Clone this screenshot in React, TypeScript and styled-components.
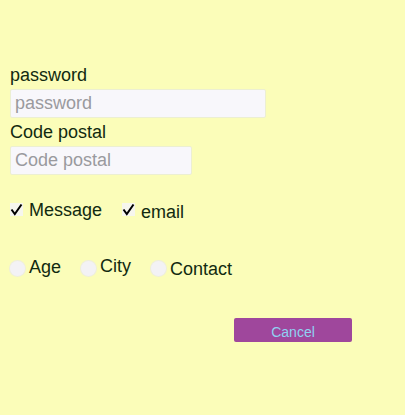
import React from "react";
import styled, { createGlobalStyle } from "styled-components";

const Global = createGlobalStyle`
  html, body { margin: 0; padding: 0; background: #fbfdb9; }
  body { font-family: "Liberation Sans", Arial, sans-serif; }
`;

const Page = styled.div`
  width: 405px;
  height: 415px;
  box-sizing: border-box;
  padding: 65px 0 0 10px;
  display: flex;
  flex-direction: column;
  color: #112a10;
`;

const Label = styled.label`
  font-size: 18px;
  line-height: 21px;
  height: 21px;
`;

const Input = styled.input<{ $w: number }>`
  box-sizing: border-box;
  width: ${(p) => p.$w}px;
  height: 29px;
  margin: 3px 0 4px 0;
  border: 1px solid #ecefd2;
  border-radius: 2px;
  background: #f8f7fb;
  padding: 0 4px;
  font-family: "Liberation Sans", Arial, sans-serif;
  font-size: 18px;
  color: #222;
  outline: none;
  &::placeholder { color: #9a9a9e; }
`;

const Row = styled.div<{ $top: number; $gap: number }>`
  display: flex;
  align-items: flex-start;
  gap: ${(p) => p.$gap}px;
  margin-top: ${(p) => p.$top}px;
  height: 22px;
`;

const Option = styled.label<{ $drop: number }>`
  display: flex;
  align-items: flex-start;
  font-size: 18px;
  line-height: 21px;
  span.t { margin-top: ${(p) => p.$drop}px; }
`;

const Box = styled.span`
  width: 13px;
  height: 13px;
  margin: 3px 6px 0 0;
  background: #f6f6ee;
  display: flex;
  align-items: center;
  justify-content: center;
`;

const Radio = styled.span`
  width: 15px;
  height: 15px;
  border-radius: 50%;
  margin: 4px 4px 0 0;
  background: #f3f2f5;
  box-shadow: 0 0 0 1px #eeeedd;
`;

const ButtonRow = styled.div`
  display: flex;
  margin-top: 39px;
  padding-left: 224px;
`;

const Button = styled.button`
  width: 118px;
  height: 24px;
  border: none;
  border-radius: 2px;
  background: #9f479c;
  color: #8fd2f2;
  font-family: "Liberation Sans", Arial, sans-serif;
  font-size: 14px;
  padding: 3px 0 0 0;
`;

const Check = () => (
  <svg width="13" height="13" viewBox="0 0 13 13">
    <path d="M1.5 6.5 L4.8 11 L11.5 1.5" fill="none" stroke="#000" strokeWidth="2" />
  </svg>
);

export default function App() {
  return (
    <>
      <Global />
      <Page>
        <Label>password</Label>
        <Input $w={256} placeholder="password" type="text" />
        <Label>Code postal</Label>
        <Input $w={182} placeholder="Code postal" type="text" />
        <Row $top={21} $gap={20}>
          <Option $drop={0}>
            <Box><Check /></Box>
            <span className="t">Message</span>
          </Option>
          <Option $drop={2}>
            <Box><Check /></Box>
            <span className="t">email</span>
          </Option>
        </Row>
        <Row $top={35} $gap={20}>
          <Option $drop={0}>
            <Radio />
            <span className="t">Age</span>
          </Option>
          <Option $drop={-1}>
            <Radio />
            <span className="t">City</span>
          </Option>
          <Option $drop={2}>
            <Radio />
            <span className="t">Contact</span>
          </Option>
        </Row>
        <ButtonRow>
          <Button>Cancel</Button>
        </ButtonRow>
      </Page>
    </>
  );
}
